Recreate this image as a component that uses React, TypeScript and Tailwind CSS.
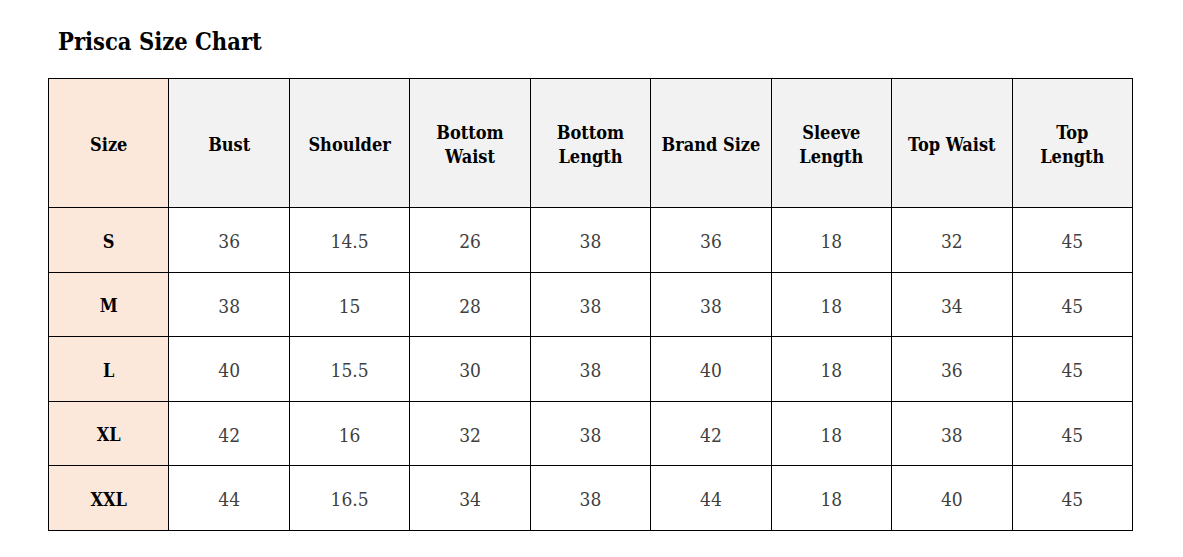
import React from "react";

const headers = [
  "Size",
  "Bust",
  "Shoulder",
  "Bottom Waist",
  "Bottom Length",
  "Brand Size",
  "Sleeve Length",
  "Top Waist",
  "Top Length",
];

const rows: (string | number)[][] = [
  ["S", 36, "14.5", 26, 38, 36, 18, 32, 45],
  ["M", 38, "15", 28, 38, 38, 18, 34, 45],
  ["L", 40, "15.5", 30, 38, 40, 18, 36, 45],
  ["XL", 42, "16", 32, 38, 42, 18, 38, 45],
  ["XXL", 44, "16.5", 34, 38, 44, 18, 40, 45],
];

export default function App() {
  return (
    <div
      className="w-[1183px] h-[557px] bg-white pl-[48px] pt-[26px]"
      style={{ fontFamily: '"DejaVu Serif Condensed", "DejaVu Serif", serif' }}
    >
      <h1 className="pl-[10px] text-[23.5px] font-bold leading-[32px] text-black">
        Prisca Size Chart
      </h1>
      <table className="mt-[20px] w-[1085px] border-collapse table-fixed">
        <thead>
          <tr className="h-[129px]">
            {headers.map((h, i) => (
              <th
                key={h}
                className={
                  "border border-black px-[10px] pt-[3px] text-[18px] font-bold leading-[24px] text-black " +
                  (i === 0 ? "bg-[#fce8da]" : "bg-[#f2f2f2]")
                }
              >
                {h}
              </th>
            ))}
          </tr>
        </thead>
        <tbody>
          {rows.map((r) => (
            <tr key={r[0]} className="h-[64.5px]">
              {r.map((c, i) => (
                <td
                  key={i}
                  className={
                    "border border-black pt-[3px] text-center " +
                    (i === 0
                      ? "bg-[#fce8da] text-[18px] font-bold text-black"
                      : "bg-white text-[19px] text-[#404040]")
                  }
                >
                  {c}
                </td>
              ))}
            </tr>
          ))}
        </tbody>
      </table>
    </div>
  );
}
